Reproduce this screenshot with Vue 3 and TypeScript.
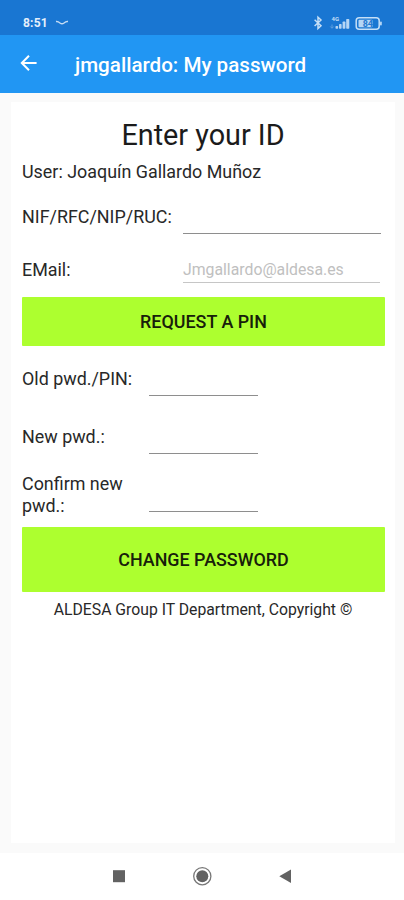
<script setup lang="ts">
import { ref } from 'vue'

interface PasswordField {
  id: string
  label: string
}

const nif = ref('')
const email = ref('')
const passwordFields: PasswordField[] = [
  { id: 'old', label: 'Old pwd./PIN:' },
  { id: 'new', label: 'New pwd.:' },
  { id: 'confirm', label: 'Confirm new pwd.:' },
]
const passwords = ref<Record<string, string>>({ old: '', new: '', confirm: '' })
</script>

<template>
  <div class="screen">
    <div class="status">
      <span class="clock">8:51</span>
      <svg class="swoosh" width="14" height="6" viewBox="0 0 14 6">
        <path d="M1 1.6Q3 1.3 5 3Q7 4.5 9 3Q11 1.3 13 1.6" fill="none" stroke="#c5dcf4" stroke-width="1.5" />
      </svg>
      <svg class="indicators" width="72" height="16" viewBox="0 0 72 16">
        <path d="M1.6 4.8L8 10.8L5 13.6V2.2L8 5L1.6 11" fill="none" stroke="#c5dff7" stroke-width="1.5" />
        <text x="18.5" y="6.4" font-size="6" font-weight="700" fill="#c5dff7">4G</text>
        <path d="M19 9.5V13M17.3 11.5L19 13.3L20.7 11.5" fill="none" stroke="#5f9fde" stroke-width="1" />
        <g fill="#b5d6f5">
          <rect x="22.5" y="11" width="2.6" height="2.8" rx=".7" />
          <rect x="26" y="9" width="2.6" height="4.8" rx=".7" />
          <rect x="29.6" y="6.6" width="2.8" height="7.2" rx=".7" />
          <rect x="33.2" y="4" width="3.1" height="9.8" rx=".7" />
          <rect x="45.5" y="4.8" width="14" height="7.4" rx="1" />
          <rect x="67" y="6.5" width="1.8" height="4" rx=".8" />
        </g>
        <rect x="43.2" y="2.8" width="23" height="11.4" rx="3" fill="none" stroke="#c5dff7" stroke-width="1.5" />
        <text x="54.8" y="11.7" text-anchor="middle" font-size="9" font-weight="700" fill="#2478cf">84</text>
      </svg>
    </div>

    <header class="toolbar">
      <svg class="back" width="18" height="18" viewBox="0 0 18 18">
        <path d="M16.6 9H2M9 1.8L1.8 9L9 16.2" fill="none" stroke="#fff" stroke-width="2" />
      </svg>
      <h1>jmgallardo: My password</h1>
    </header>

    <main class="body">
      <section class="card">
        <h2><span>Enter your ID</span></h2>
        <p class="user">User: Joaquín Gallardo Muñoz</p>
        <div class="row nif">
          <label for="nif">NIF/RFC/NIP/RUC:</label>
          <input id="nif" v-model="nif" type="text" />
        </div>
        <div class="row email">
          <label for="email">EMail:</label>
          <input id="email" v-model="email" type="text" placeholder="Jmgallardo@aldesa.es" />
        </div>
        <button class="request"><span>REQUEST A PIN</span></button>
        <div v-for="field in passwordFields" :key="field.id" class="row pwd" :class="field.id">
          <label :for="field.id">{{ field.label }}</label>
          <input :id="field.id" v-model="passwords[field.id]" type="password" />
        </div>
        <button class="change"><span>CHANGE PASSWORD</span></button>
        <p class="footer"><span>ALDESA Group IT Department, Copyright ©</span></p>
      </section>
    </main>

    <nav class="nav">
      <svg width="404" height="47" viewBox="0 0 404 47">
        <rect x="113" y="17.2" width="12" height="12" fill="#626262" />
        <circle cx="202.3" cy="23.2" r="8.6" fill="none" stroke="#777" stroke-width="1.3" />
        <circle cx="202.3" cy="23.2" r="6" fill="#626262" />
        <path d="M279.3 23.2L291 16.6V30Z" fill="#626262" />
      </svg>
    </nav>
  </div>
</template>

<style>
body {
  margin: 0;
  background: #fff;
}
</style>

<style scoped>
.screen {
  width: 404px;
  height: 900px;
  display: flex;
  flex-direction: column;
  overflow: hidden;
  font-family: Roboto, "Liberation Sans", sans-serif;
  color: #282828;
}
.status {
  height: 35px;
  flex: none;
  box-sizing: border-box;
  padding: 10px 19px 0 23px;
  display: flex;
  align-items: center;
  background: #1976d2;
}
.clock {
  margin-top: 1px;
  color: #e3effb;
  font-size: 12px;
  font-weight: 700;
  letter-spacing: 0.2px;
}
.swoosh {
  margin-left: 7px;
}
.indicators {
  margin-left: auto;
}
.toolbar {
  height: 58px;
  flex: none;
  box-sizing: border-box;
  padding: 0 20px 2px;
  display: flex;
  align-items: center;
  background: #2196f3;
  color: #fff;
}
h1 {
  margin: 3px 0 0 37px;
  font-size: 20.6px;
  font-weight: 500;
  line-height: 24px;
  white-space: nowrap;
}
.body {
  height: 760px;
  flex: none;
  box-sizing: border-box;
  padding: 9px 9px 10px 11px;
  background: #fafafa;
}
.card {
  height: 741px;
  box-sizing: border-box;
  padding: 14px 11px 0;
  background: #fff;
}
h2 {
  margin: 0;
  height: 38px;
  font-size: 28.8px;
  font-weight: 400;
  line-height: 38px;
  text-align: center;
  color: #1b1b1b;
}
.user {
  margin: 7px 0 0;
  font-size: 17.9px;
  line-height: 22px;
}
.row {
  display: grid;
  grid-template-columns: 161px 198px;
  font-size: 17.9px;
  line-height: 22px;
}
.row input {
  width: 100%;
  min-width: 0;
  box-sizing: border-box;
  margin: 0;
  padding: 0;
  border: 0;
  border-bottom: 1px solid #8e8e8e;
  border-radius: 0;
  outline: 0;
  background: transparent;
  font: inherit;
  font-size: 15.8px;
  color: #222;
}
.row input::placeholder {
  color: #c0c0c0;
  opacity: 1;
}
.nif {
  margin-top: 23px;
  height: 28px;
}
.email {
  margin-top: 25px;
  height: 24px;
}
.email input {
  width: 197px;
  padding-bottom: 1px;
  border-color: #c6c6c6;
}
button {
  display: block;
  width: 363px;
  padding: 0;
  border: 0;
  border-radius: 1px;
  background: #adff2f;
  font: 500 17.9px/22px Roboto, "Liberation Sans", sans-serif;
  color: #17200a;
}
.request {
  margin-top: 14px;
  height: 49px;
}
.pwd {
  grid-template-columns: 127px 109px;
}
.old {
  margin-top: 22px;
  height: 28px;
}
.new {
  margin-top: 30px;
  height: 28px;
}
.confirm {
  margin-top: 19px;
  height: 39px;
}
.confirm label {
  width: 110px;
}
.confirm input {
  height: 39px;
}
.change {
  margin-top: 15px;
  height: 65px;
}
.footer {
  margin: 8px 0 0;
  font-size: 15.75px;
  line-height: 20px;
  text-align: center;
}
.nav {
  height: 47px;
  flex: none;
  background: #fff;
}
.nav svg {
  display: block;
}
</style>
